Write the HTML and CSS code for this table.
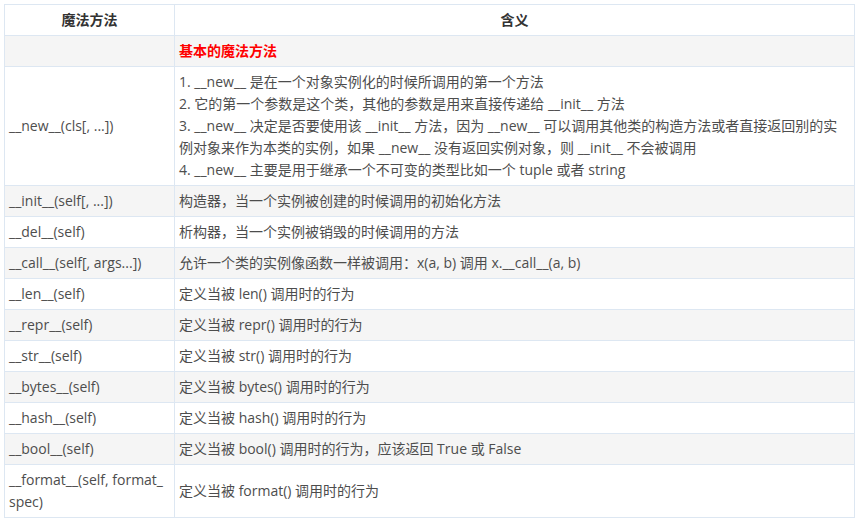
FILE: index.html
```html
<!DOCTYPE html>
<html lang="zh">
<head>
<meta charset="utf-8">
<title>魔法方法</title>
<link rel="stylesheet" href="styles.css">
</head>
<body>
<table class="magic">
  <colgroup><col class="c-name"><col class="c-desc"></colgroup>
  <thead>
    <tr><th>魔法方法</th><th>含义</th></tr>
  </thead>
  <tbody>
    <tr><td></td><td class="section">基本的魔法方法</td></tr>
    <tr><td>__new__(cls[, ...])</td><td>1. __new__ 是在一个对象实例化的时候所调用的第一个方法<br>2. 它的第一个参数是这个类，其他的参数是用来直接传递给 __init__ 方法<br>3. __new__ 决定是否要使用该 __init__ 方法，因为 __new__ 可以调用其他类的构造方法或者直接返回别的实例对象来作为本类的实例，如果 __new__ 没有返回实例对象，则 __init__ 不会被调用<br>4. __new__ 主要是用于继承一个不可变的类型比如一个 tuple 或者 string</td></tr>
    <tr><td>__init__(self[, ...])</td><td>构造器，当一个实例被创建的时候调用的初始化方法</td></tr>
    <tr><td>__del__(self)</td><td>析构器，当一个实例被销毁的时候调用的方法</td></tr>
    <tr><td>__call__(self[, args...])</td><td>允许一个类的实例像函数一样被调用：x(a, b) 调用 x.__call__(a, b)</td></tr>
    <tr><td>__len__(self)</td><td>定义当被 len() 调用时的行为</td></tr>
    <tr><td>__repr__(self)</td><td>定义当被 repr() 调用时的行为</td></tr>
    <tr><td>__str__(self)</td><td>定义当被 str() 调用时的行为</td></tr>
    <tr><td>__bytes__(self)</td><td>定义当被 bytes() 调用时的行为</td></tr>
    <tr><td>__hash__(self)</td><td>定义当被 hash() 调用时的行为</td></tr>
    <tr><td>__bool__(self)</td><td>定义当被 bool() 调用时的行为，应该返回 True 或 False</td></tr>
    <tr><td>__format__(self, format_<wbr>spec)</td><td>定义当被 format() 调用时的行为</td></tr>
  </tbody>
</table>
</body>
</html>
```
FILE: styles.css
```css
html, body {
  margin: 0;
  padding: 0;
  background: #ffffff;
}
body {
  padding: 4px;
  font-family: "Open Sans", "Noto Sans CJK SC", sans-serif;
  font-size: 14px;
  color: #4d4d4d;
}
.magic {
  border-collapse: collapse;
  width: 851px;
  table-layout: fixed;
}
.c-name { width: 170px; }
.magic th,
.magic td {
  border: 1px solid #dde7f2;
  padding: 4px 4px;
  line-height: 22px;
  vertical-align: middle;
  text-align: left;
  overflow-wrap: anywhere;
}
.magic th {
  text-align: center;
  font-weight: bold;
  color: #333333;
}
.magic tbody tr:nth-child(odd) {
  background: #f5f5f5;
}
.magic .section {
  color: #ff0000;
  font-weight: bold;
}
```
